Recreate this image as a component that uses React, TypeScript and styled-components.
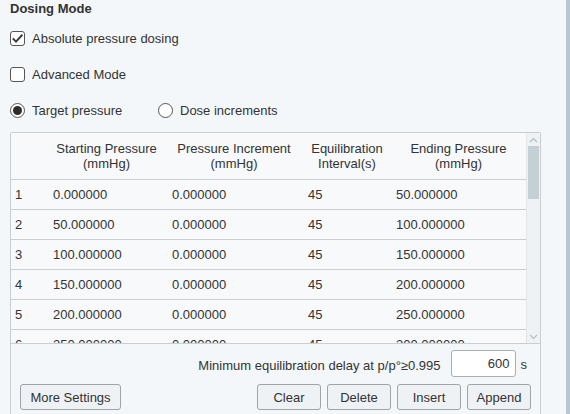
import React from "react";
import styled, { createGlobalStyle } from "styled-components";

const GlobalStyle = createGlobalStyle`
  html, body {
    margin: 0;
    padding: 0;
    background: #f4f7f9;
  }
  body {
    font-family: "Liberation Sans", Arial, sans-serif;
    font-size: 13px;
    color: #333;
  }
`;

const Page = styled.div`
  display: flex;
  width: 570px;
  height: 414px;
  overflow: hidden;
  background: #f4f7f9;
`;

const Main = styled.div`
  flex: 1;
  padding-left: 10px;
  display: flex;
  flex-direction: column;
`;

const PageScroll = styled.div`
  width: 4px;
  background: #b9c8d0;
`;

const Title = styled.div`
  font-weight: bold;
  height: 20px;
  line-height: 17px;
`;

const OptionRow = styled.div`
  height: 36px;
  display: flex;
  align-items: center;
  gap: 7px;
`;

const Option = styled.label`
  display: flex;
  align-items: center;
  gap: 7px;
  width: ${(p: { w?: number }) => (p.w ? `${p.w}px` : "auto")};
`;

const Box = styled.span`
  width: 15px;
  height: 15px;
  box-sizing: border-box;
  border: 1.4px solid #555;
  border-radius: 3px;
  background: #fff;
  display: flex;
  align-items: center;
  justify-content: center;
`;

const Circle = styled.span`
  width: 15px;
  height: 15px;
  box-sizing: border-box;
  border: 1.4px solid #555;
  border-radius: 50%;
  background: #fff;
  display: flex;
  align-items: center;
  justify-content: center;
`;

const Dot = styled.span`
  width: 9px;
  height: 9px;
  border-radius: 50%;
  background: #2d2d2d;
`;

const Frame = styled.div`
  margin-top: 4px;
  width: 531px;
  flex: 1;
  box-sizing: border-box;
  border: 1px solid #c9ced2;
  border-bottom: none;
  border-radius: 2px 2px 0 0;
  display: flex;
  flex-direction: column;
`;

const TableArea = styled.div`
  height: 210px;
  display: flex;
  border-bottom: 1px solid #c9ced2;
  background: #f7f9fa;
`;

const Grid = styled.div`
  flex: 1;
  overflow: hidden;
`;

const cols = "37px 117px 138px 88px 1fr";

const HeadRow = styled.div`
  display: grid;
  grid-template-columns: ${cols};
  height: 46px;
  border-bottom: 1px solid #c9ced2;
  align-items: center;
`;

const HeadCell = styled.div`
  text-align: center;
  line-height: 15px;
  color: #333;
`;

const Row = styled.div`
  display: grid;
  grid-template-columns: ${cols};
  height: 29px;
  border-bottom: 1px solid #c9ced2;
  align-items: center;
`;

const Cell = styled.div`
  padding-left: ${(p: { pad?: number }) => p.pad ?? 5}px;
  white-space: nowrap;
`;

const ScrollBar = styled.div`
  width: 13px;
  display: flex;
  flex-direction: column;
  background: #eef2f4;
  border-left: 1px solid #e0e6ea;
`;

const Arrow = styled.div`
  height: 13px;
  display: flex;
  align-items: center;
  justify-content: center;
`;

const Track = styled.div`
  flex: 1;
  padding: 0 1px;
`;

const Thumb = styled.div`
  height: 53px;
  background: #c4cfd6;
`;

const Bottom = styled.div`
  flex: 1;
  padding: 6px 9px 0 9px;
  display: flex;
  flex-direction: column;
  gap: 7px;
`;

const DelayRow = styled.div`
  display: flex;
  justify-content: flex-end;
  align-items: center;
  height: 27px;
  gap: 5px;
  padding-right: 4px;
`;

const DelayLabel = styled.span`
  margin-right: 5px;
  margin-top: 4px;
`;

const Input = styled.div`
  width: 65px;
  height: 27px;
  box-sizing: border-box;
  border: 1px solid #a9b0b5;
  border-radius: 3px;
  background: #fff;
  text-align: right;
  padding-right: 5px;
  line-height: 25px;
`;

const Unit = styled.span`
  margin-top: 2px;
`;

const ButtonRow = styled.div`
  display: flex;
  align-items: center;
  gap: 6px;
`;

const Spacer = styled.div`
  flex: 1;
`;

const Button = styled.button`
  font-family: "Liberation Sans", Arial, sans-serif;
  font-size: 13px;
  color: #333;
  height: 26px;
  width: ${(p: { w?: number }) => (p.w ? `${p.w}px` : "64px")};
  box-sizing: border-box;
  border: 1px solid #9ea5aa;
  border-radius: 3px;
  background: #eff2f4;
  padding: 0;
`;

const rows = [
  ["0.000000", "0.000000", "45", "50.000000"],
  ["50.000000", "0.000000", "45", "100.000000"],
  ["100.000000", "0.000000", "45", "150.000000"],
  ["150.000000", "0.000000", "45", "200.000000"],
  ["200.000000", "0.000000", "45", "250.000000"],
  ["250.000000", "0.000000", "45", "300.000000"],
];

const Check = () => (
  <svg width="13" height="13" viewBox="0 0 13 13">
    <polyline points="1.8,6.4 5,9.6 11.4,2.8" fill="none" stroke="#3a3a3a" strokeWidth="2" />
  </svg>
);

const Chevron = ({ up }: { up?: boolean }) => (
  <svg width="9" height="6" viewBox="0 0 9 6">
    <polyline
      points={up ? "1,5 4.5,1.5 8,5" : "1,1 4.5,4.5 8,1"}
      fill="none"
      stroke="#b3bec5"
      strokeWidth="1.2"
    />
  </svg>
);

const App = () => {
  return (
    <>
      <GlobalStyle />
      <Page>
        <Main>
          <Title>Dosing Mode</Title>
          <OptionRow>
            <Option>
              <Box>
                <Check />
              </Box>
              Absolute pressure dosing
            </Option>
          </OptionRow>
          <OptionRow>
            <Option>
              <Box />
              Advanced Mode
            </Option>
          </OptionRow>
          <OptionRow>
            <Option w={141}>
              <Circle>
                <Dot />
              </Circle>
              Target pressure
            </Option>
            <Option>
              <Circle />
              Dose increments
            </Option>
          </OptionRow>
          <Frame>
            <TableArea>
              <Grid>
                <HeadRow>
                  <HeadCell />
                  <HeadCell>
                    Starting Pressure
                    <br />
                    (mmHg)
                  </HeadCell>
                  <HeadCell>
                    Pressure Increment
                    <br />
                    (mmHg)
                  </HeadCell>
                  <HeadCell>
                    Equilibration
                    <br />
                    Interval(s)
                  </HeadCell>
                  <HeadCell>
                    Ending Pressure
                    <br />
                    (mmHg)
                  </HeadCell>
                </HeadRow>
                {rows.map((r, i) => (
                  <Row key={i}>
                    <Cell pad={4}>{i + 1}</Cell>
                    <Cell>{r[0]}</Cell>
                    <Cell pad={7}>{r[1]}</Cell>
                    <Cell>{r[2]}</Cell>
                    <Cell>{r[3]}</Cell>
                  </Row>
                ))}
              </Grid>
              <ScrollBar>
                <Arrow>
                  <Chevron up />
                </Arrow>
                <Track>
                  <Thumb />
                </Track>
                <Arrow>
                  <Chevron />
                </Arrow>
              </ScrollBar>
            </TableArea>
            <Bottom>
              <DelayRow>
                <DelayLabel>Minimum equilibration delay at p/p°≥0.995</DelayLabel>
                <Input>600</Input>
                <Unit>s</Unit>
              </DelayRow>
              <ButtonRow>
                <Button w={101}>More Settings</Button>
                <Spacer />
                <Button>Clear</Button>
                <Button>Delete</Button>
                <Button>Insert</Button>
                <Button>Append</Button>
              </ButtonRow>
            </Bottom>
          </Frame>
        </Main>
        <PageScroll />
      </Page>
    </>
  );
};

export default App;
